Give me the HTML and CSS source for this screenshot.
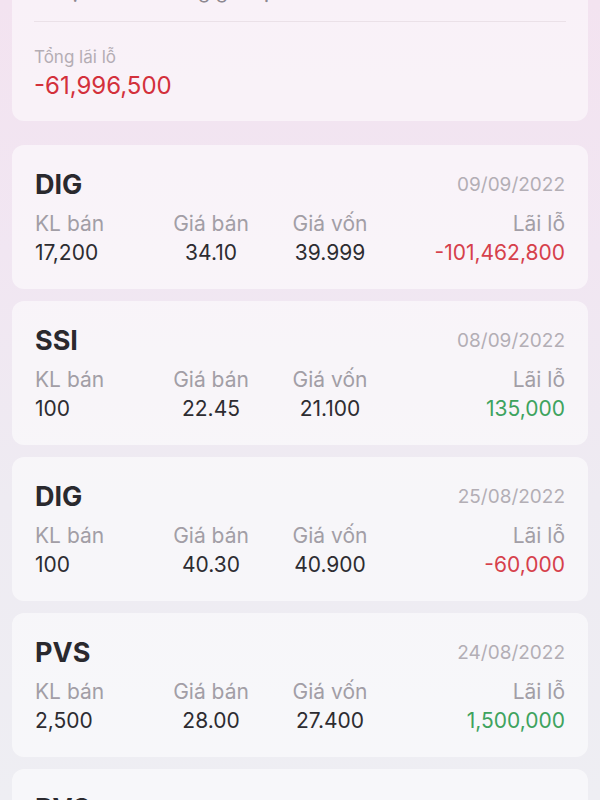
FILE: index.html
```html
<!DOCTYPE html>
<html lang="vi">
<head>
<meta charset="utf-8">
<title>Lịch sử bán</title>
<link rel="stylesheet" href="styles.css">
</head>
<body>
<main class="page">
  <section class="card summary">
    <div class="sum-top">
      <span class="sum-top-l">Số lệnh bán · Tổng giá trị bán</span>
      <span class="sum-top-r">›</span>
    </div>
    <div class="sum-body">
      <div class="sum-label">Tổng lãi lỗ</div>
      <div class="sum-value loss">-61,996,500</div>
    </div>
  </section>

  <section class="list">
    <article class="card trade">
      <div class="trade-head"><span class="ticker">DIG</span><span class="date">09/09/2022</span></div>
      <div class="grid">
        <span class="lbl c1">KL bán</span><span class="lbl c2">Giá bán</span><span class="lbl c3">Giá vốn</span><span class="lbl c4">Lãi lỗ</span>
        <span class="val c1">17,200</span><span class="val c2">34.10</span><span class="val c3">39.999</span><span class="val c4 loss">-101,462,800</span>
      </div>
    </article>
    <article class="card trade">
      <div class="trade-head"><span class="ticker">SSI</span><span class="date">08/09/2022</span></div>
      <div class="grid">
        <span class="lbl c1">KL bán</span><span class="lbl c2">Giá bán</span><span class="lbl c3">Giá vốn</span><span class="lbl c4">Lãi lỗ</span>
        <span class="val c1">100</span><span class="val c2">22.45</span><span class="val c3">21.100</span><span class="val c4 gain">135,000</span>
      </div>
    </article>
    <article class="card trade">
      <div class="trade-head"><span class="ticker">DIG</span><span class="date">25/08/2022</span></div>
      <div class="grid">
        <span class="lbl c1">KL bán</span><span class="lbl c2">Giá bán</span><span class="lbl c3">Giá vốn</span><span class="lbl c4">Lãi lỗ</span>
        <span class="val c1">100</span><span class="val c2">40.30</span><span class="val c3">40.900</span><span class="val c4 loss">-60,000</span>
      </div>
    </article>
    <article class="card trade">
      <div class="trade-head"><span class="ticker">PVS</span><span class="date">24/08/2022</span></div>
      <div class="grid">
        <span class="lbl c1">KL bán</span><span class="lbl c2">Giá bán</span><span class="lbl c3">Giá vốn</span><span class="lbl c4">Lãi lỗ</span>
        <span class="val c1">2,500</span><span class="val c2">28.00</span><span class="val c3">27.400</span><span class="val c4 gain">1,500,000</span>
      </div>
    </article>
    <article class="card trade">
      <div class="trade-head"><span class="ticker">PVS</span><span class="date">23/08/2022</span></div>
      <div class="grid">
        <span class="lbl c1">KL bán</span><span class="lbl c2">Giá bán</span><span class="lbl c3">Giá vốn</span><span class="lbl c4">Lãi lỗ</span>
        <span class="val c1">1,000</span><span class="val c2">27.50</span><span class="val c3">27.400</span><span class="val c4 gain">100,000</span>
      </div>
    </article>
  </section>
</main>
</body>
</html>
```

FILE: styles.css
```css
* { box-sizing: border-box; }
html, body { margin: 0; padding: 0; }
body {
  width: 600px;
  height: 800px;
  overflow: hidden;
  font-family: Inter, "Noto Sans", "DejaVu Sans", sans-serif;
  color: #2b2a2f;
  background: linear-gradient(180deg, #f3e3f0 0px, #f1e6f2 250px, #eeebf2 500px, #eeeef3 800px);
}
.page {
  padding: 0 12px;
  display: flex;
  flex-direction: column;
}
.card {
  background: rgba(255, 255, 255, 0.55);
  border-radius: 12px;
}
.summary {
  margin-top: -30px;
  padding: 0 22px 20px 22px;
  background: rgba(255, 255, 255, 0.5);
}
.sum-top {
  display: flex;
  justify-content: space-between;
  font-size: 20px;
  line-height: 28px;
  color: #8d8890;
  padding-top: 6.5px;
  padding-bottom: 16.2px;
  border-bottom: 1px solid #ebe1e8;
}
.sum-top-r { color: #b9b2b9; }
.sum-body { padding-top: 23px; }
.sum-label {
  font-size: 17px;
  line-height: 24px;
  color: #b4adb4;
}
.sum-value {
  margin-top: 2px;
  font-size: 24px;
  line-height: 30px;
  font-weight: 400;
}
.loss { color: #d3303b; }
.gain { color: #3ea35e; }

.list {
  margin-top: 24px;
  display: flex;
  flex-direction: column;
  gap: 12px;
}
.trade {
  padding: 23px 23px 22px 23px;
}
.trade-head {
  display: flex;
  justify-content: space-between;
  align-items: center;
  line-height: 34px;
}
.ticker {
  font-size: 27px;
  font-weight: 700;
  color: #2a292e;
}
.date {
  font-size: 19px;
  color: #b3aeb5;
}
.grid {
  margin-top: 8px;
  display: grid;
  grid-template-columns: 117px 118px 120px 1fr;
  row-gap: 1px;
}
.lbl {
  font-size: 21px;
  line-height: 28px;
  color: #a29ea6;
}
.val {
  font-size: 21px;
  line-height: 28px;
  color: #2d2c31;
}
.c1 { text-align: left; }
.c2, .c3 { text-align: center; }
.c4 { text-align: right; }
.val.c4.loss { color: #d6404b; }
.val.c4.gain { color: #3ea35e; }
```
